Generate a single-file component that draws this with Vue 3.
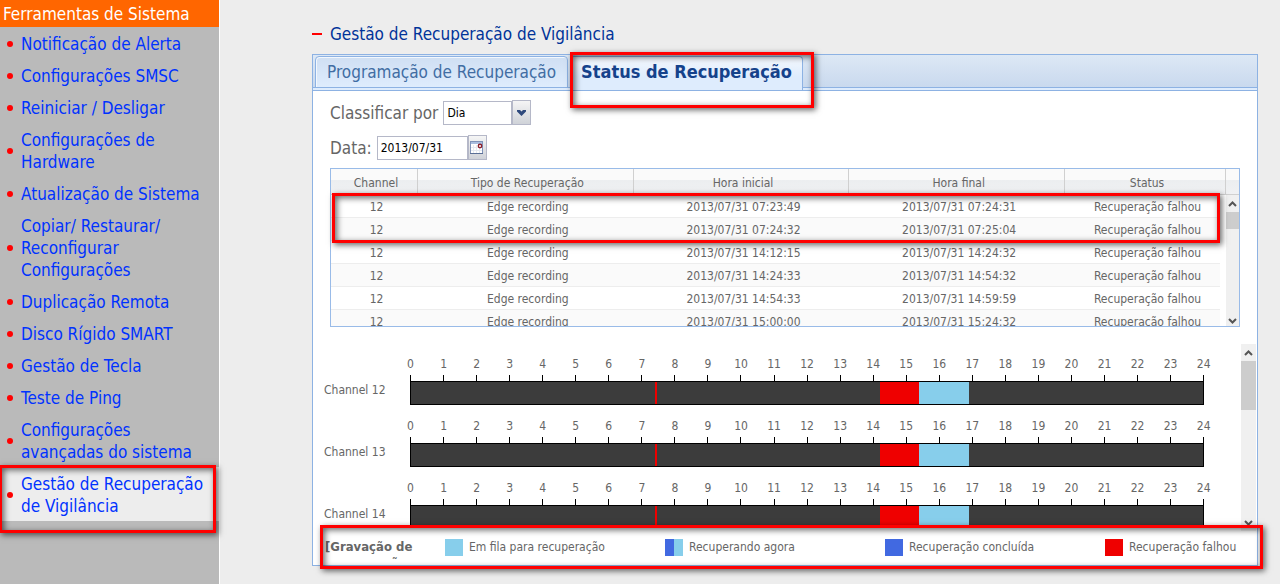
<script setup>
const menu = [
  'Notificação de Alerta',
  'Configurações SMSC',
  'Reiniciar / Desligar',
  'Configurações de\nHardware',
  'Atualização de Sistema',
  'Copiar/ Restaurar/\nReconfigurar\nConfigurações',
  'Duplicação Remota',
  'Disco Rígido SMART',
  'Gestão de Tecla',
  'Teste de Ping',
  'Configurações\navançadas do sistema',
  'Gestão de Recuperação\nde Vigilância',
]

const records = [
  ['07:23:49', '07:24:31'],
  ['07:24:32', '07:25:04'],
  ['14:12:15', '14:24:32'],
  ['14:24:33', '14:54:32'],
  ['14:54:33', '14:59:59'],
  ['15:00:00', '15:24:32'],
]

const hours = Array.from({ length: 25 }, (_, i) => i)
const channels = [12, 13, 14]

const DAY = 24 * 60
const segments = [
  { kind: 'idle', minutes: 444 },
  { kind: 'failed', minutes: 2 },
  { kind: 'idle', minutes: 406 },
  { kind: 'failed', minutes: 70 },
  { kind: 'queued', minutes: 91 },
]
const share = (m) => ({ width: (m / DAY) * 100 + '%' })

const legend = [
  { kind: 'queued', text: 'Em fila para recuperação' },
  { kind: 'running', text: 'Recuperando agora' },
  { kind: 'done', text: 'Recuperação concluída' },
  { kind: 'failed', text: 'Recuperação falhou' },
]
</script>

<template>
  <div class="page">
    <nav class="sidebar">
      <h2 class="sidebar-title">Ferramentas de Sistema</h2>
      <ul class="menu">
        <li v-for="(item, i) in menu" :key="item" :class="{ current: i === menu.length - 1 }">
          <i class="dot"></i>
          <a href="#">{{ item }}</a>
          <span v-if="i === menu.length - 1" class="callout callout-menu"></span>
        </li>
      </ul>
    </nav>

    <main class="main">
      <h1 class="heading"><i class="dash"></i>Gestão de Recuperação de Vigilância</h1>

      <section class="panel">
        <div class="tabs" role="tablist">
          <button class="tab" role="tab" type="button">Programação de Recuperação</button>
          <button class="tab active" role="tab" type="button" aria-selected="true">
            Status de Recuperação
            <span class="callout callout-tab"></span>
          </button>
        </div>

        <div class="filters">
          <div class="field">
            <label for="sort">Classificar por</label>
            <div class="combo">
              <select id="sort"><option>Dia</option></select>
              <span class="trigger">
                <svg width="11" height="8" viewBox="0 0 11 8"><path d="M1 1h3l1.500 1.500L7 1h3v1.500L5.500 7 1 2.500z" fill="#2f4a7d" /></svg>
              </span>
            </div>
          </div>
          <div class="field">
            <label for="date">Data:</label>
            <div class="combo">
              <input id="date" type="text" value="2013/07/31" />
              <button class="trigger" type="button" aria-label="Calendário">
                <svg width="14" height="14" viewBox="0 0 14 14">
                  <rect x="0.500" y="0.500" width="12" height="12" fill="#fff" stroke="#7f93b8" />
                  <path d="M1 1h11v2H1z" fill="#a9bedf" />
                  <path d="M3.500 4v8M6.500 4v8M9.500 4v8M1 6.500h11M1 9.500h11" stroke="#e6eaf1" />
                  <path d="M0 12.500h13" stroke="#5b6f96" />
                  <circle cx="10" cy="5" r="1.700" fill="#fff" stroke="#8c1f2b" stroke-width="1.400" />
                </svg>
              </button>
            </div>
          </div>
        </div>

        <div class="grid">
          <div class="grid-clip">
            <table>
              <colgroup>
                <col class="c-channel" /><col /><col /><col /><col class="c-status" /><col class="c-bar" />
              </colgroup>
              <thead>
                <tr>
                  <th>Channel</th>
                  <th>Tipo de Recuperação</th>
                  <th>Hora inicial</th>
                  <th>Hora final</th>
                  <th>Status</th>
                  <th></th>
                </tr>
              </thead>
              <tbody>
                <tr v-for="r in records" :key="r[0]">
                  <td>12</td>
                  <td>Edge recording</td>
                  <td>2013/07/31 {{ r[0] }}</td>
                  <td>2013/07/31 {{ r[1] }}</td>
                  <td>Recuperação falhou</td>
                  <td></td>
                </tr>
              </tbody>
            </table>
            <div class="scroll scroll-grid">
              <svg width="9" height="6" viewBox="0 0 9 6"><path d="M1 5l3.500-3.500L8 5" /></svg>
              <i class="thumb"></i>
              <svg class="down" width="9" height="6" viewBox="0 0 9 6"><path d="M1 1l3.500 3.500L8 1" /></svg>
            </div>
          </div>
          <span class="callout callout-rows"></span>
        </div>

        <div class="timelines">
          <div class="channels">
            <div v-for="c in channels" :key="c" class="channel">
              <span class="name">Channel {{ c }}</span>
              <div class="chart">
                <div class="hours"><span v-for="h in hours" :key="h">{{ h }}</span></div>
                <div class="bar">
                  <i v-for="(s, i) in segments" :key="i" :class="s.kind" :style="share(s.minutes)"></i>
                </div>
              </div>
            </div>
          </div>
          <div class="scroll scroll-chart">
            <svg width="9" height="6" viewBox="0 0 9 6"><path d="M1 5l3.500-3.500L8 5" /></svg>
            <i class="thumb"></i>
            <svg class="down" width="9" height="6" viewBox="0 0 9 6"><path d="M1 1l3.500 3.500L8 1" /></svg>
          </div>
        </div>

        <div class="legend">
          <strong>[Gravação de recuperação</strong>
          <span v-for="l in legend" :key="l.kind" class="entry">
            <i :class="l.kind"></i>{{ l.text }}
          </span>
          <span class="callout callout-legend"></span>
        </div>
      </section>
    </main>
  </div>
</template>

<style>
body {
  background: #ededed;
}
</style>

<style scoped>
* {
  box-sizing: border-box;
}
.page {
  display: flex;
  min-height: 100vh;
  font-family: Tahoma, 'DejaVu Sans Condensed', 'Noto Sans', sans-serif;
  font-size: 12px;
  color: #666;
  background: #ededed;
  overflow: hidden;
}
.sidebar {
  flex: none;
  width: 220px;
  background: #bababa;
  border-right: 1px solid #fff;
  font-size: 17px;
  line-height: 22px;
}
.sidebar-title {
  margin: 0;
  padding: 3px 3px 2px;
  font-size: 17px;
  font-weight: 400;
  line-height: 22px;
  color: #fff;
  background: #f60;
}
.menu {
  margin: 0;
  padding: 0;
  list-style: none;
}
.menu li {
  position: relative;
  display: flex;
  align-items: center;
  gap: 8px;
  padding: 6px 0 4px 7px;
}
.menu li.current {
  background: #ededed;
}
.menu a {
  color: #0032ff;
  text-decoration: none;
  white-space: pre;
}
.dot {
  flex: none;
  width: 6px;
  height: 6px;
  border-radius: 50%;
  background: #f00;
}
.callout {
  position: absolute;
  z-index: 2;
  border: 3px solid #f00;
  box-shadow: 2px 2px 6px rgba(0, 0, 0, 0.6), inset 2px 2px 6px rgba(0, 0, 0, 0.6);
  pointer-events: none;
}
.callout-menu {
  inset: -2px 3px -12px -1px;
}
.main {
  flex: 1;
  min-width: 0;
  padding: 22px 22px 18px 92px;
}
.heading {
  display: flex;
  align-items: center;
  gap: 8px;
  margin: 0;
  height: 32px;
  padding-bottom: 8px;
  font-size: 17px;
  font-weight: 400;
  color: #003399;
}
.dash {
  width: 10px;
  height: 2px;
  background: #f00;
}
.panel {
  border: 1px solid #8db2e3;
  background: #fff;
}
.tabs {
  display: flex;
  gap: 2px;
  height: 36px;
  padding: 1px 2px 0;
  border-bottom: 1px solid #8db2e3;
  background: linear-gradient(#dde8f5, #c9d9ee 32px, #8db2e3 32px, #8db2e3 33px, #deecfd 33px);
}
.tab {
  position: relative;
  height: 32px;
  padding: 0 11px;
  border: 1px solid #8db2e3;
  border-radius: 4px 4px 0 0;
  background: linear-gradient(#cfdff3, #deecfd);
  box-shadow: inset 1px 1px 0 #f2f7fd;
  font: inherit;
  font-size: 17px;
  color: #416da3;
  white-space: nowrap;
}
.tab.active {
  height: 34px;
  padding: 0 10px 4px;
  border-bottom: 0;
  background: linear-gradient(#f4f8fd, #deecfd 60%);
  font-size: 18px;
  font-weight: 700;
  color: #15428b;
}
.callout-tab {
  inset: -5px -12px -18px -1px;
}
.filters {
  display: grid;
  gap: 10px;
  padding: 9px 17px 8px;
}
.field {
  display: flex;
  align-items: center;
  gap: 5px;
  height: 25px;
}
.field label {
  padding-top: 1px;
  font-size: 17px;
}
.combo {
  display: flex;
  align-items: center;
}
.combo select,
.combo input {
  width: 69px;
  height: 24px;
  padding: 1px 3px 0;
  border: 1px solid #b5b8c8;
  border-radius: 0;
  appearance: none;
  background: #fff;
  font: inherit;
  color: #000;
}
.combo input {
  width: 91px;
}
.trigger {
  display: flex;
  align-items: center;
  justify-content: center;
  width: 19px;
  height: 25px;
  padding: 0;
  border: 1px solid #b5b8c8;
  background: linear-gradient(#f5f5f5, #cfd2d8);
}
.grid {
  position: relative;
  margin: 0 17px;
  border: 1px solid #99bbe8;
}
.grid-clip {
  position: relative;
  height: 157px;
  overflow: hidden;
}
table {
  width: 100%;
  border-collapse: separate;
  border-spacing: 0;
  table-layout: fixed;
  text-align: center;
}
.c-channel {
  width: 87px;
}
.c-status {
  width: 161px;
}
.c-bar {
  width: 13px;
}
th {
  height: 26px;
  padding: 2px 0 0 4px;
  border-right: 1px solid #d0d0d0;
  border-bottom: 1px solid #d0d0d0;
  background: linear-gradient(#fafafa 45%, #eceef0 45%, #f0f1f3);
  font-weight: 400;
}
th:last-child {
  border-right: 0;
}
td {
  height: 23px;
  padding: 2px 0 0 4px;
  border-bottom: 1px solid #ededed;
}
tbody tr:nth-child(even) td {
  background: #fafafa;
}
.scroll {
  display: flex;
  flex-direction: column;
  align-items: center;
  background: #f0f0f0;
}
.scroll svg {
  flex: none;
  margin: 6px 0 5px;
  fill: none;
  stroke: #555;
  stroke-width: 2;
}
.scroll .thumb {
  width: 100%;
  background: #cdcdcd;
}
.scroll .down {
  margin-top: auto;
}
.scroll-grid {
  position: absolute;
  top: 26px;
  right: 0;
  bottom: 0;
  width: 19px;
  border-left: 6px solid #fff;
}
.scroll-grid .thumb {
  height: 17px;
}
.scroll-grid .down {
  margin-bottom: 2px;
}
.callout-rows {
  top: 24px;
  right: 19px;
  left: 1px;
  height: 50px;
}
.timelines {
  display: flex;
  gap: 17px;
  height: 187px;
  margin-top: 17px;
  padding: 0 1px 0 11px;
}
.channels {
  flex: 1;
  min-width: 0;
  height: 182px;
  padding-right: 20px;
  overflow: hidden;
}
.channel {
  display: flex;
  height: 62px;
  padding-top: 12px;
}
.name {
  width: 86px;
  padding-top: 26px;
  line-height: 16px;
}
.chart {
  flex: 1;
  min-width: 0;
}
.hours {
  display: flex;
  margin: 0 -16px;
  line-height: 16px;
}
.hours span {
  flex: 1;
  display: flex;
  flex-direction: column;
  align-items: center;
}
.hours span::after {
  content: '';
  width: 1px;
  height: 6px;
  margin-top: 3px;
  background: #000;
}
.bar {
  display: flex;
  height: 24px;
  border: 1px solid #000;
  background: #3c3c3c;
}
.bar .failed {
  min-width: 2px;
}
.failed {
  background: #ef0000;
}
.queued {
  background: #87ceeb;
}
.done {
  background: #4169e1;
}
.running {
  background: linear-gradient(90deg, #4169e1 50%, #87ceeb 50%);
}
.scroll-chart {
  flex: none;
  width: 15px;
}
.scroll-chart .thumb {
  height: 49px;
}
.legend {
  position: relative;
  display: grid;
  grid-template-columns: 120px repeat(3, 1fr) 152px;
  height: 34px;
  padding-left: 12px;
}
.legend strong {
  height: 28px;
  padding: 8px 24px 0 0;
  overflow: hidden;
  font-size: 13px;
  line-height: 16px;
}
.entry {
  display: flex;
  align-items: center;
  gap: 6px;
  height: 32px;
  white-space: nowrap;
}
.entry i {
  width: 18px;
  height: 17px;
}
.callout-legend {
  inset: -6px -6px -4px 7px;
}
</style>
